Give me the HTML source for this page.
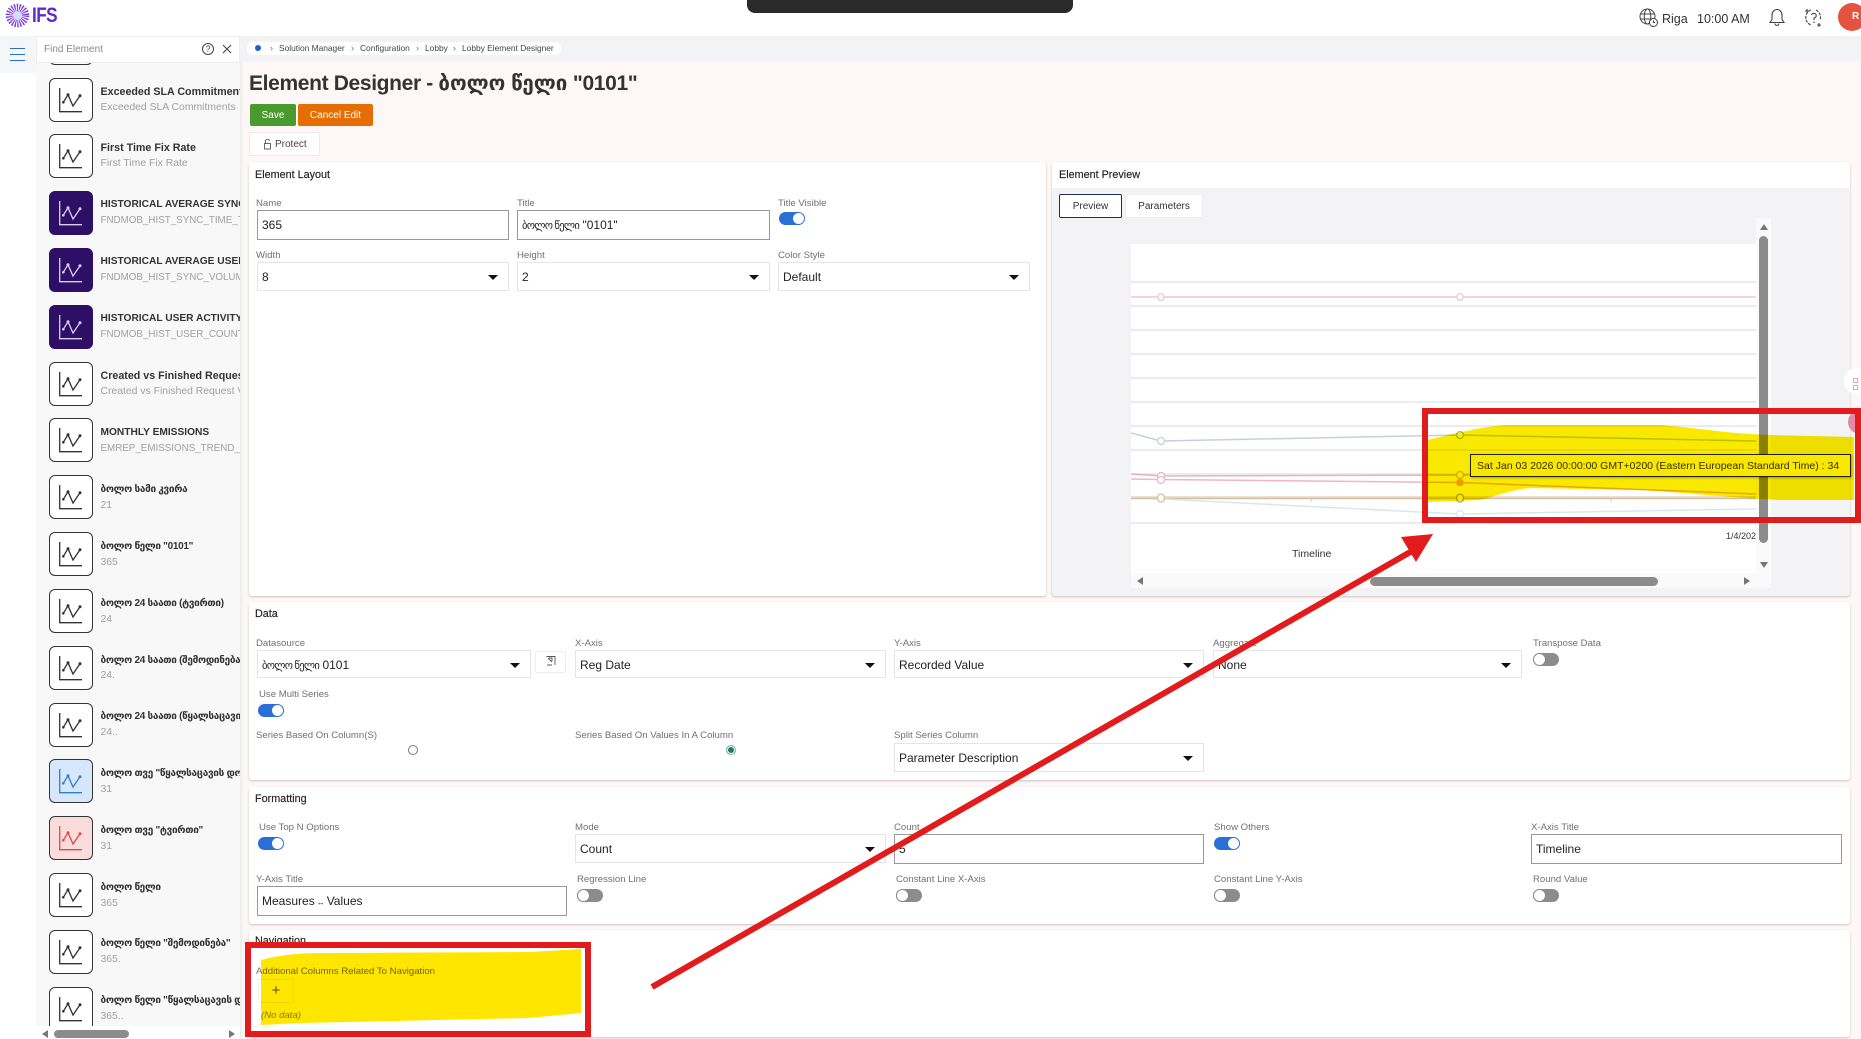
<!DOCTYPE html>
<html><head><meta charset="utf-8"><title>Element Designer</title>
<style>
html,body{margin:0;padding:0}
body{width:1861px;height:1039px;overflow:hidden;position:relative;background:#fdf8f7;font-family:"Liberation Sans","DejaVu Sans",sans-serif;color:#222}
div,span{position:absolute;white-space:nowrap;box-sizing:border-box}
.card{background:#fff;border-radius:3px;box-shadow:0 1px 2px rgba(0,0,0,.22)}
.h{font-size:10.8px;color:#222;line-height:12px;-webkit-text-stroke:.15px #222}
.l{font-size:9.6px;color:#707070;line-height:12px;margin-top:1px}
.i{background:#fff;border:1px solid #999;font-size:12px;line-height:29px;padding-left:4px;color:#222}
.s{background:#fff;border:1px solid #e5e5e5;font-size:12px;line-height:28px;padding-left:4px;color:#222}
.s:after{content:"";position:absolute;right:10px;top:12px;border-left:5px solid transparent;border-right:5px solid transparent;border-top:5px solid #111}
.t{width:26px;height:13px;border-radius:7px;background:#2a6fd6}
.t:after{content:"";position:absolute;right:1px;top:1px;width:11px;height:11px;border-radius:50%;background:#fff}
.o{width:26px;height:13px;border-radius:7px;background:#8c8c8c}
.o:after{content:"";position:absolute;left:0;top:0;width:13px;height:13px;border-radius:50%;background:#fff;border:1px solid #888;box-sizing:border-box}
.it{position:absolute;left:13px;width:44px;height:44px;border:1px solid #333;border-radius:6px;background:#fff;color:#333}
.it svg{position:absolute;left:-1px;top:-1px}
.tt{left:64.5px;font-size:10.7px;font-weight:bold;color:#333;line-height:12px;margin-top:1px}
.g{font-size:10px;letter-spacing:-.3px}
.c{font-size:10.2px}
.st{left:64.5px;font-size:10.4px;color:#a0a0a0;line-height:12px;margin-top:1px}
.d{font-size:9.8px}
.bc{font-size:8.4px;color:#444;line-height:12px;top:42px}
.bs{font-size:9px;color:#777;line-height:12px;top:42px}
</style></head><body>
<svg width="0" height="0" style="position:absolute"><symbol id="ic" viewBox="0 0 44 44"><path d="M10.7 10V33.7H33" fill="none" stroke="currentColor" stroke-width="1.3"/><path d="M14.3 24.3L19 16.7L24 28L31 17.7" fill="none" stroke="currentColor" stroke-width="1.3"/><circle cx="14.3" cy="24.3" r="1.3" fill="currentColor"/><circle cx="19" cy="16.7" r="1.5" fill="currentColor"/><circle cx="31" cy="17.7" r="1.5" fill="currentColor"/></symbol></svg>

<!-- header -->
<div style="left:0;top:0;width:1861px;height:36px;background:#fff"></div>
<svg style="position:absolute;left:4px;top:2px" width="28" height="28" viewBox="0 0 28 28"><circle cx="13.5" cy="13.5" r="8" fill="none" stroke="#7a3fe0" stroke-width="7.5" stroke-dasharray="1.2 1.1"/><circle cx="13.5" cy="13.5" r="4.3" fill="#d5dcfb"/></svg>
<div style="left:32px;top:3px;font-size:21px;font-weight:bold;color:#5f2bc8;line-height:26px;letter-spacing:-.7px;transform:scaleX(.82);transform-origin:0 0">IFS</div>
<div style="left:747px;top:0;width:326px;height:13px;background:#2a2a2a;border-radius:0 0 8px 8px"></div>
<svg style="position:absolute;left:1639px;top:8px" width="20" height="20" viewBox="0 0 20 20" fill="none" stroke="#444" stroke-width="1"><circle cx="8.5" cy="8.5" r="7.5"/><ellipse cx="8.5" cy="8.5" rx="3.3" ry="7.5"/><path d="M1 6H16M1 11H12"/><circle cx="14.5" cy="14.5" r="4" fill="#fff"/><path d="M14.5 12.5V14.5H16"/></svg>
<div style="left:1662px;top:12px;font-size:12.5px;line-height:15px;color:#333">Riga</div>
<div style="left:1697px;top:12px;font-size:12.5px;line-height:15px;color:#333">10:00 AM</div>
<svg style="position:absolute;left:1768px;top:8px" width="18" height="19" viewBox="0 0 18 19" fill="none" stroke="#444" stroke-width="1.1"><path d="M2 14.5H16L14 11.5V7A5 5.5 0 0 0 4 7V11.5ZM7 15.5C7 18 11 18 11 15.5M9 1V2"/></svg>
<svg style="position:absolute;left:1804px;top:8px" width="20" height="20" viewBox="0 0 20 20" fill="none" stroke="#444" stroke-width="1.1"><path d="M7 2A8 8 0 0 0 7 17M12 2A8 8 0 0 1 16 12" stroke-dasharray="3 1"/><path d="M7.5 7A2.4 2.4 0 1 1 10 10V12M10 13.5V15M15 15V19M13 17H17M3 1V5M1 3H5"/></svg>
<div style="left:1838px;top:3px;width:28px;height:28px;border-radius:50%;background:#e4533f;color:#fff;font-size:10px;line-height:28px;padding-left:14px;font-weight:bold">R</div>

<!-- left rail -->
<div style="left:0;top:36px;width:36px;height:1003px;background:#fff"></div>
<div style="left:0;top:36px;width:36px;height:37px;background:#f4f6fa"></div>
<div style="left:10px;top:47.5px;width:15px;height:1.5px;background:#2a6fc9"></div>
<div style="left:10px;top:53.5px;width:15px;height:1.5px;background:#2a6fc9"></div>
<div style="left:10px;top:59.5px;width:15px;height:1.5px;background:#2a6fc9"></div>

<!-- sidebar -->
<div style="left:36px;top:0;width:204px;height:1026px;overflow:hidden;background:#f8f8f9;clip-path:inset(62px 0 0 0)">
<div class="it" style="top:21px"></div>
<div class="it" style="top:78px"><svg width="44" height="44"><use href="#ic"/></svg></div><div class="tt" style="top:85px">Exceeded SLA Commitments</div><div class="st" style="top:101px">Exceeded SLA Commitments</div>
<div class="it" style="top:134px"><svg width="44" height="44"><use href="#ic"/></svg></div><div class="tt" style="top:141px">First Time Fix Rate</div><div class="st" style="top:157px">First Time Fix Rate</div>
<div class="it" style="top:191px;background:#2e0f66;color:#dccbf6;border-color:#2e0f66"><svg width="44" height="44"><use href="#ic"/></svg></div><div class="tt c" style="top:198px">HISTORICAL AVERAGE SYNC TIME</div><div class="st d" style="top:214px">FNDMOB_HIST_SYNC_TIME_TREND</div>
<div class="it" style="top:248px;background:#2e0f66;color:#dccbf6;border-color:#2e0f66"><svg width="44" height="44"><use href="#ic"/></svg></div><div class="tt c" style="top:255px">HISTORICAL AVERAGE USER SYNC</div><div class="st d" style="top:271px">FNDMOB_HIST_SYNC_VOLUME_TREND</div>
<div class="it" style="top:305px;background:#2e0f66;color:#dccbf6;border-color:#2e0f66"><svg width="44" height="44"><use href="#ic"/></svg></div><div class="tt c" style="top:312px">HISTORICAL USER ACTIVITY SYNC</div><div class="st d" style="top:328px">FNDMOB_HIST_USER_COUNT_TREND</div>
<div class="it" style="top:362px"><svg width="44" height="44"><use href="#ic"/></svg></div><div class="tt" style="top:369px">Created vs Finished Requests</div><div class="st" style="top:385px">Created vs Finished Request Volume</div>
<div class="it" style="top:418px"><svg width="44" height="44"><use href="#ic"/></svg></div><div class="tt c" style="top:426px">MONTHLY EMISSIONS</div><div class="st d" style="top:442px">EMREP_EMISSIONS_TREND_BY_MONTH</div>
<div class="it" style="top:475px"><svg width="44" height="44"><use href="#ic"/></svg></div><div class="tt g" style="top:483px">ბოლო სამი კვირა</div><div class="st" style="top:499px">21</div>
<div class="it" style="top:532px"><svg width="44" height="44"><use href="#ic"/></svg></div><div class="tt g" style="top:540px">ბოლო წელი "0101"</div><div class="st" style="top:556px">365</div>
<div class="it" style="top:589px"><svg width="44" height="44"><use href="#ic"/></svg></div><div class="tt g" style="top:597px">ბოლო 24 საათი (ტვირთი)</div><div class="st" style="top:613px">24</div>
<div class="it" style="top:646px"><svg width="44" height="44"><use href="#ic"/></svg></div><div class="tt g" style="top:654px">ბოლო 24 საათი (შემოდინება)</div><div class="st" style="top:669px">24.</div>
<div class="it" style="top:703px"><svg width="44" height="44"><use href="#ic"/></svg></div><div class="tt g" style="top:710px">ბოლო 24 საათი (წყალსაცავის დონე)</div><div class="st" style="top:726px">24..</div>
<div class="it" style="top:759px;background:#d6e6fb;color:#2f7fd1"><svg width="44" height="44"><use href="#ic"/></svg></div><div class="tt g" style="top:767px">ბოლო თვე "წყალსაცავის დონე"</div><div class="st" style="top:783px">31</div>
<div class="it" style="top:816px;background:#fbdcdc;color:#e04a44"><svg width="44" height="44"><use href="#ic"/></svg></div><div class="tt g" style="top:824px">ბოლო თვე "ტვირთი"</div><div class="st" style="top:840px">31</div>
<div class="it" style="top:873px"><svg width="44" height="44"><use href="#ic"/></svg></div><div class="tt g" style="top:881px">ბოლო წელი</div><div class="st" style="top:897px">365</div>
<div class="it" style="top:930px"><svg width="44" height="44"><use href="#ic"/></svg></div><div class="tt g" style="top:937px">ბოლო წელი "შემოდინება"</div><div class="st" style="top:953px">365.</div>
<div class="it" style="top:987px"><svg width="44" height="44"><use href="#ic"/></svg></div><div class="tt g" style="top:994px">ბოლო წელი "წყალსაცავის დონე"</div><div class="st" style="top:1010px">365..</div>
</div>
<div style="left:36px;top:1026px;width:204px;height:13px;background:#fff"></div>
<div style="left:54px;top:1030px;width:75px;height:8px;border-radius:4px;background:#8c8c8c"></div>
<div style="left:42px;top:1030px;width:0;height:0;border-top:4px solid transparent;border-bottom:4px solid transparent;border-right:6px solid #777"></div>
<div style="left:229px;top:1030px;width:0;height:0;border-top:4px solid transparent;border-bottom:4px solid transparent;border-left:6px solid #777"></div>
<div style="left:240px;top:36px;width:9px;height:1003px;background:linear-gradient(90deg,#ececee,#fdf8f7 4px)"></div>

<!-- search -->
<div style="left:36px;top:36px;width:204px;height:27px;background:#fff;border:1px solid #ececec"></div>
<div style="left:44px;top:44px;font-size:10px;color:#8a8a8a;line-height:12px">Find Element</div>
<div style="left:202px;top:43px;width:12px;height:12px;border:1px solid #444;border-radius:50%;font-size:9px;line-height:10px;text-align:center;color:#444">?</div>
<svg style="position:absolute;left:222px;top:44px" width="10" height="10"><path d="M1 1L9 9M9 1L1 9" stroke="#444" stroke-width="1.1"/></svg>

<!-- breadcrumb -->
<div style="left:240px;top:36px;width:1621px;height:25px;background:#f3f3f5"></div>
<div style="left:247px;top:42px;width:314px;height:13px;background:#fff;border-radius:6px"></div>
<div style="left:255px;top:45px;width:6px;height:6px;border-radius:50%;background:#1f5fd0"></div>
<div class="bs" style="left:270px">›</div><div class="bc" style="left:279px">Solution Manager</div>
<div class="bs" style="left:351px">›</div><div class="bc" style="left:360px">Configuration</div>
<div class="bs" style="left:416px">›</div><div class="bc" style="left:425px">Lobby</div>
<div class="bs" style="left:453px">›</div><div class="bc" style="left:462px">Lobby Element Designer</div>

<!-- title -->
<div style="left:249px;top:71px;font-size:21px;letter-spacing:-.35px;font-weight:bold;line-height:26px;color:#333">Element Designer - <span style="position:static;letter-spacing:0;font-size:20.5px">ბოლო წელი</span> "0101"</div>
<div style="left:250px;top:104px;width:46px;height:22px;background:#4a9b2e;border-radius:2px;color:#fff;font-size:10px;line-height:23px;text-align:center">Save</div>
<div style="left:298px;top:104px;width:75px;height:22px;background:#e66d04;border-radius:2px;color:#fff;font-size:10px;line-height:23px;text-align:center">Cancel Edit</div>
<div style="left:249px;top:132px;width:71px;height:24px;background:#fff;border:1px solid #ececec;border-radius:2px;font-size:10px;line-height:24px;padding-left:25px;color:#444">Protect</div>
<svg style="position:absolute;left:264px;top:139px" width="8" height="11" fill="none" stroke="#666"><rect x=".5" y="4.5" width="6" height="5.5"/><path d="M1.5 4.5V2.5A2 2 0 0 1 5.5 2"/></svg>

<!-- Element Layout -->
<div class="card" style="left:249px;top:162px;width:797px;height:434px"></div>
<div class="h" style="left:255px;top:169px">Element Layout</div>
<div class="l" style="left:256px;top:197px">Name</div>
<div class="i" style="left:257px;top:210px;width:252px;height:30px">365</div>
<div class="l" style="left:517px;top:197px">Title</div>
<div class="i" style="left:517px;top:210px;width:253px;height:30px"><span style="position:static;font-size:10.5px;letter-spacing:-.7px">ბოლო წელი</span> "0101"</div>
<div class="l" style="left:778px;top:197px">Title Visible</div>
<div class="t" style="left:779px;top:212px"></div>
<div class="l" style="left:256px;top:249px">Width</div>
<div class="s" style="left:257px;top:262px;width:252px;height:29px">8</div>
<div class="l" style="left:517px;top:249px">Height</div>
<div class="s" style="left:517px;top:262px;width:253px;height:29px">2</div>
<div class="l" style="left:778px;top:249px">Color Style</div>
<div class="s" style="left:778px;top:262px;width:252px;height:29px">Default</div>

<!-- Element Preview -->
<div class="card" style="left:1052px;top:162px;width:798px;height:434px;background:#f3f3f6"></div>
<div style="left:1052px;top:162px;width:798px;height:26px;background:#fff;border-radius:3px 3px 0 0"></div>
<div class="h" style="left:1059px;top:169px">Element Preview</div>
<div style="left:1059px;top:194px;width:63px;height:24px;background:#fff;border:1px solid #1d2d5c;border-radius:2px;font-size:10px;line-height:23px;text-align:center;color:#333">Preview</div>
<div style="left:1125px;top:194px;width:78px;height:24px;background:#fff;border:1px solid #eee;border-radius:2px;font-size:10px;line-height:23px;text-align:center;color:#333">Parameters</div>
<div style="left:1756px;top:218px;width:15px;height:370px;background:#fafafa"></div>
<div style="left:1131px;top:244px;width:625px;height:329px;background:#fff"></div>
<div style="left:1131px;top:573px;width:640px;height:15px;background:#fafafa"></div>
<svg style="position:absolute;left:1131px;top:244px" width="625" height="329" viewBox="1131 244 625 329" fill="none">
<g stroke="#e6e6e6" stroke-width="1.4"><path d="M1131 282H1756M1131 306H1756M1131 330H1756M1131 354H1756M1131 378H1756M1131 402H1756M1131 426H1756M1131 450H1756M1131 474H1756M1131 523H1756"/></g>
<path d="M1311 498V502M1611 498V502" stroke="#ccc"/>
<g stroke-width="1.5">
<path d="M1131 297H1756" stroke="#efc6d2"/>
<path d="M1131 433L1161 441L1460 435L1756 441" stroke="#c2d3d6"/>
<path d="M1131 474L1161 476L1460 475L1756 475" stroke="#e4b4c2"/>
<path d="M1131 479L1161 479.5L1460 482.5L1756 494" stroke="#eeb6c6"/>
<path d="M1131 497H1756" stroke="#f3d0c8"/>
<path d="M1131 498.5H1756" stroke="#c8c6a0"/>
<path d="M1161 499L1460 514L1756 509" stroke="#d5e8f2"/>
</g>
<g fill="#fff" stroke-width="1.3">
<ellipse cx="1161" cy="297" rx="3" ry="3.5" stroke="#efc6d2"/><ellipse cx="1460" cy="297" rx="3" ry="3.5" stroke="#efc6d2"/>
<ellipse cx="1161" cy="441" rx="3.5" ry="3.5" stroke="#c2d3d6"/><ellipse cx="1460" cy="435" rx="3.5" ry="3.5" stroke="#a7bcae"/>
<ellipse cx="1161" cy="476" rx="3.5" ry="3.5" stroke="#e4b4c2"/><ellipse cx="1460" cy="475" rx="3.5" ry="3.5" stroke="#e4b4c2"/>
<ellipse cx="1161" cy="480" rx="3.5" ry="3.5" stroke="#eeb6c6"/>
<ellipse cx="1161" cy="498" rx="3.5" ry="4" stroke="#c8c6a0"/><ellipse cx="1460" cy="498" rx="3.5" ry="4" stroke="#a8a868"/>
<ellipse cx="1460" cy="514" rx="3.5" ry="3.5" stroke="#d5e8f2"/>
</g>
<circle cx="1460" cy="482.5" r="3.8" fill="#f6a800"/>
</svg>
<div style="left:1726px;top:530px;width:30px;height:12px;overflow:hidden;font-size:9px;line-height:12px;color:#333">1/4/2026</div>
<div style="left:1292px;top:548px;font-size:10.5px;line-height:12px;color:#333">Timeline</div>
<div style="left:1759px;top:236px;width:9px;height:307px;border-radius:5px;background:#8c8c8c"></div>
<div style="left:1759.5px;top:224px;width:0;height:0;border-left:4.5px solid transparent;border-right:4.5px solid transparent;border-bottom:6px solid #777"></div>
<div style="left:1759.5px;top:562px;width:0;height:0;border-left:4.5px solid transparent;border-right:4.5px solid transparent;border-top:6px solid #777"></div>
<div style="left:1370px;top:577px;width:288px;height:9px;border-radius:5px;background:#8c8c8c"></div>
<div style="left:1137px;top:577px;width:0;height:0;border-top:4px solid transparent;border-bottom:4px solid transparent;border-right:6px solid #777"></div>
<div style="left:1744px;top:577px;width:0;height:0;border-top:4px solid transparent;border-bottom:4px solid transparent;border-left:6px solid #777"></div>
<div style="left:1470px;top:454px;width:381px;height:23px;background:#fffde8;border:1px solid #222;box-shadow:1px 1px 2px rgba(0,0,0,.3);font-size:10.5px;line-height:22px;padding-left:6px;color:#333">Sat Jan 03 2026 00:00:00 GMT+0200 (Eastern European Standard Time) : 34</div>
<div style="left:1844px;top:368px;width:24px;height:26px;border-radius:50%;background:#fff"></div>
<div style="left:1853px;top:378px;width:5px;height:5px;border:1px solid #e9a4b5"></div>
<div style="left:1853px;top:385px;width:5px;height:5px;border:1px solid #e9a4b5"></div>
<div style="left:1848px;top:410px;width:24px;height:24px;border-radius:50%;background:#e58aa5"></div>

<!-- Data -->
<div class="card" style="left:249px;top:602px;width:1601px;height:178px"></div>
<div class="h" style="left:255px;top:608px">Data</div>
<div class="l" style="left:256px;top:637px">Datasource</div>
<div class="s" style="left:257px;top:650px;width:274px;height:28px"><span style="position:static;font-size:10.5px;letter-spacing:-.7px">ბოლო წელი</span> 0101</div>
<div style="left:535px;top:651px;width:31px;height:22px;border:1px solid #eee;border-radius:2px;background:#fff"></div>
<svg style="position:absolute;left:546px;top:656px" width="10" height="10" fill="none" stroke="#555"><path d="M.5 .5H9V9M1 9H6M2 2L6 6M3 2H6V5" stroke-width=".9"/></svg>
<div class="l" style="left:575px;top:637px">X-Axis</div>
<div class="s" style="left:575px;top:650px;width:311px;height:28px">Reg Date</div>
<div class="l" style="left:894px;top:637px">Y-Axis</div>
<div class="s" style="left:894px;top:650px;width:310px;height:28px">Recorded Value</div>
<div class="l" style="left:1213px;top:637px">Aggregate</div>
<div class="s" style="left:1213px;top:650px;width:309px;height:28px">None</div>
<div class="l" style="left:1533px;top:637px">Transpose Data</div>
<div class="o" style="left:1533px;top:653px"></div>
<div class="l" style="left:259px;top:688px">Use Multi Series</div>
<div class="t" style="left:258px;top:704px"></div>
<div class="l" style="left:256px;top:729px">Series Based On Column(S)</div>
<div style="left:408px;top:745px;width:10px;height:10px;border:1px solid #777;border-radius:50%;background:#fff"></div>
<div class="l" style="left:575px;top:729px">Series Based On Values In A Column</div>
<div style="left:726px;top:745px;width:10px;height:10px;border:1px solid #7fb5a8;border-radius:50%;background:#1f7a68;box-shadow:inset 0 0 0 1px #fff"></div>
<div class="l" style="left:894px;top:729px">Split Series Column</div>
<div class="s" style="left:894px;top:743px;width:310px;height:29px">Parameter Description</div>

<!-- Formatting -->
<div class="card" style="left:249px;top:787px;width:1601px;height:137px"></div>
<div class="h" style="left:255px;top:793px">Formatting</div>
<div class="l" style="left:259px;top:821px">Use Top N Options</div>
<div class="t" style="left:258px;top:837px"></div>
<div class="l" style="left:575px;top:821px">Mode</div>
<div class="s" style="left:575px;top:834px;width:311px;height:29px">Count</div>
<div class="l" style="left:894px;top:821px">Count</div>
<div class="i" style="left:894px;top:834px;width:310px;height:30px">5</div>
<div class="l" style="left:1214px;top:821px">Show Others</div>
<div class="t" style="left:1214px;top:837px"></div>
<div class="l" style="left:1531px;top:821px">X-Axis Title</div>
<div class="i" style="left:1531px;top:834px;width:311px;height:30px">Timeline</div>
<div class="l" style="left:256px;top:873px">Y-Axis Title</div>
<div class="i" style="left:257px;top:886px;width:310px;height:30px">Measures<span style="position:static;font-size:8px;margin:0 2px">↔</span>Values</div>
<div class="l" style="left:577px;top:873px">Regression Line</div>
<div class="o" style="left:577px;top:889px"></div>
<div class="l" style="left:896px;top:873px">Constant Line X-Axis</div>
<div class="o" style="left:896px;top:889px"></div>
<div class="l" style="left:1214px;top:873px">Constant Line Y-Axis</div>
<div class="o" style="left:1214px;top:889px"></div>
<div class="l" style="left:1533px;top:873px">Round Value</div>
<div class="o" style="left:1533px;top:889px"></div>

<!-- Navigation -->
<div class="card" style="left:249px;top:930px;width:1601px;height:107px"></div>
<div class="h" style="left:255px;top:935px">Navigation</div>
<div class="l" style="left:256px;top:965px">Additional Columns Related To Navigation</div>
<div style="left:258px;top:979px;width:36px;height:24px;border:1px solid #eee;border-radius:2px;font-size:15px;line-height:21px;text-align:center;color:#555">+</div>
<div style="left:261px;top:1010px;font-size:9.6px;line-height:12px;font-style:italic;color:#888">(No data)</div>

<!-- annotations -->
<svg style="position:absolute;left:0;top:0;mix-blend-mode:multiply" width="1861" height="1039" viewBox="0 0 1861 1039">
<path d="M1428 440C1460 432 1490 425 1510 425H1660C1700 428 1720 433 1770 435L1854 437V500L1780 500C1720 497 1680 492 1640 490L1530 488C1510 490 1490 498 1480 500L1428 502Z" fill="#f9e900"/>
<path d="M261 960C280 955 300 953 317 953L529 952L581 949V1013L529 1018L300 1023L261 1025Z" fill="#ffe600"/>
</svg>
<svg style="position:absolute;left:0;top:0" width="1861" height="1039" viewBox="0 0 1861 1039" fill="none">
<rect x="1425" y="411" width="433" height="109" stroke="#e21c1c" stroke-width="6"/>
<rect x="248" y="945" width="340" height="89" stroke="#e21c1c" stroke-width="6"/>
<path d="M652 987L1412 551" stroke="#e21c1c" stroke-width="6"/>
<path d="M1433 534L1401 537L1416 562Z" fill="#e21c1c"/>
</svg>
</body></html>
